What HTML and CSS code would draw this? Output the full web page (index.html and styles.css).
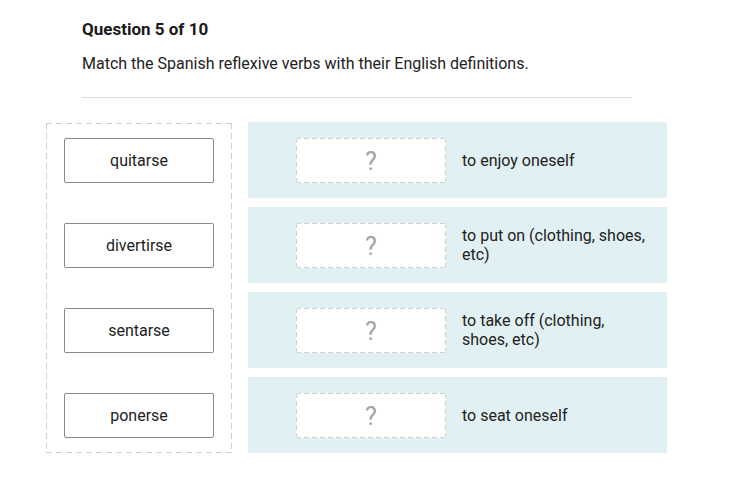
FILE: index.html
```html
<!DOCTYPE html>
<html>
<head>
<meta charset="utf-8">
<link rel="stylesheet" href="styles.css">
</head>
<body>
<div class="page">
  <h1 class="title">Question 5 of 10</h1>
  <p class="prompt">Match the Spanish reflexive verbs with their English definitions.</p>
  <hr class="divider">
  <div class="match">
    <div class="bank">
      <div class="word">quitarse</div>
      <div class="word">divertirse</div>
      <div class="word">sentarse</div>
      <div class="word">ponerse</div>
    </div>
    <div class="rows">
      <div class="row"><div class="drop">?</div><div class="def">to enjoy oneself</div></div>
      <div class="row"><div class="drop">?</div><div class="def">to put on (clothing, shoes, etc)</div></div>
      <div class="row"><div class="drop">?</div><div class="def">to take off (clothing, shoes, etc)</div></div>
      <div class="row"><div class="drop">?</div><div class="def">to seat oneself</div></div>
    </div>
  </div>
</div>
</body>
</html>
```
FILE: styles.css
```css
html, body {
  margin: 0;
  padding: 0;
  background: #fff;
}
body {
  font-family: Roboto, "Liberation Sans", sans-serif;
  color: #222;
}
.page {
  width: 550px;
  margin-left: 82px;
  padding-top: 17px;
}
.title {
  font-size: 17px;
  font-weight: 700;
  line-height: 24px;
  margin: 0;
  color: #1a1a1a;
}
.prompt {
  font-size: 16px;
  line-height: 22px;
  margin: 12px 0 0;
  color: #222;
}
.divider {
  border: 0;
  border-top: 1px solid #dcdcdc;
  margin: 22px 0 0;
}
.match {
  display: flex;
  gap: 16px;
  margin: 24px -35px 0 -36px;
}
.bank {
  width: 150px;
  padding: 15px 18px;
  display: flex;
  flex-direction: column;
  gap: 40px;
  margin-top: 1px;
  background:
    linear-gradient(to right, #cdcdcd 6px, transparent 6px) top left / 10px 1px repeat-x,
    linear-gradient(to right, #cdcdcd 6px, transparent 6px) bottom left / 10px 1px repeat-x,
    linear-gradient(to bottom, #cdcdcd 6px, transparent 6px) top left / 1px 10px repeat-y,
    linear-gradient(to bottom, #cdcdcd 6px, transparent 6px) top right / 1px 10px repeat-y;
}
.word {
  height: 43px;
  border: 1px solid #8a8a8a;
  border-radius: 2px;
  display: flex;
  align-items: center;
  justify-content: center;
  font-size: 16px;
  color: #222;
}
.rows {
  flex: 1;
  display: flex;
  flex-direction: column;
  gap: 9px;
}
.row {
  height: 76px;
  background: #e1f0f3;
  display: flex;
  align-items: center;
  padding: 0 16px 0 48px;
  gap: 16px;
}
.drop {
  flex: none;
  width: 150px;
  height: 45px;
  border-radius: 3px;
  display: flex;
  align-items: center;
  justify-content: center;
  font-size: 25px;
  font-weight: 400;
  color: #a3a3a3;
  padding-top: 2px;
  box-sizing: border-box;
  background:
    linear-gradient(to right, #cfcfcf 5px, transparent 5px) top left / 8px 1px repeat-x,
    linear-gradient(to right, #cfcfcf 5px, transparent 5px) bottom left / 8px 1px repeat-x,
    linear-gradient(to bottom, #cfcfcf 5px, transparent 5px) top left / 1px 8px repeat-y,
    linear-gradient(to bottom, #cfcfcf 5px, transparent 5px) top right / 1px 8px repeat-y,
    #fff;
}
.def {
  font-size: 16px;
  line-height: 19px;
  color: #222;
}
```
